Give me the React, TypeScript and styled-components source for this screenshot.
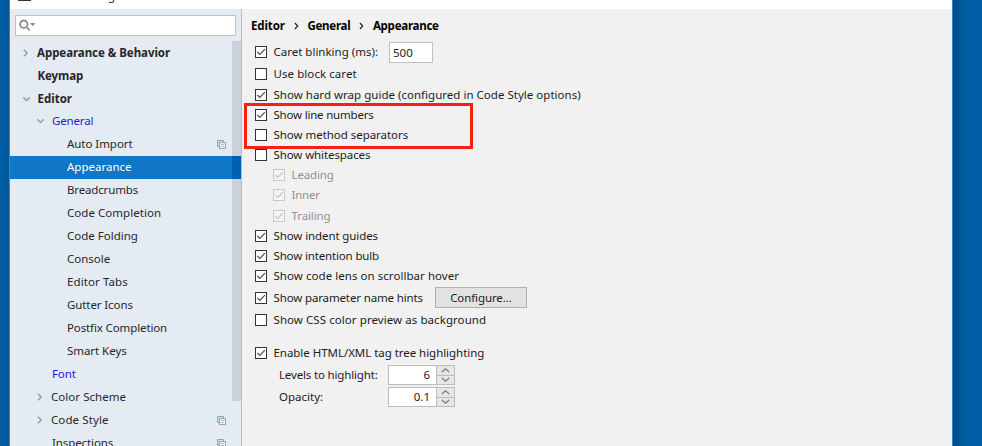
import React from "react";
import styled, { createGlobalStyle } from "styled-components";

const Global = createGlobalStyle`
  * { box-sizing: border-box; }
  body { margin: 0; overflow: hidden; font-family: "Noto Sans", sans-serif; font-size: 11.5px; color: #1c1c1e; }
`;
const Desktop = styled.div`
  width: 982px; height: 446px; overflow: hidden; display: flex; padding: 0 29px 0 9px;
  background: linear-gradient(90deg, #005ea5 0, #00579a 9px, #00579a 953px, #004a84 953px, #00589b 960px, #005ea6 970px);
`;
const Window = styled.div`
  flex: 1; display: flex; flex-direction: column; border: solid #2f86cc; border-width: 0 1px; background: #f1f1f1;
`;
const TitleBar = styled.div`
  height: 9px; background: #fff; display: flex; align-items: flex-end; padding-left: 8px; overflow: hidden; flex: none;
`;
const TitleIcon = styled.span`
  width: 13px; height: 10px; margin-bottom: 8px; background: #333; flex: none;
`;
const TitleText = styled.span`
  margin: 0 0 5px 6px; font-size: 11.3px; line-height: 16px; letter-spacing: -0.1px; color: #222;
`;
const Body = styled.div`flex: 1; display: flex; min-height: 0;`;
const Sidebar = styled.aside`
  width: 232px; background: #e5ebf2; border-right: 1px solid #b9bcc0; display: flex; flex-direction: column; flex: none;
`;
const Search = styled.div`
  margin: 6px 5px 5px 5px; height: 21px; flex: none; border: 1px solid #bfc3c7; background: #fff;
  display: flex; align-items: center; padding-left: 3px;
`;
const Tree = styled.div`position: relative; flex: 1; overflow: hidden;`;
const TreeRow = styled.div<{ $x: number; $bold?: boolean; $color?: string; $selected?: boolean }>`
  height: 23px; display: flex; align-items: center;
  padding: 0 15px ${p => (p.$bold ? 0 : 1)}px ${p => p.$x - 10 - 15}px;
  font-weight: ${p => (p.$bold ? 700 : 400)};
  color: ${p => (p.$selected ? "#fff" : p.$color || "#26272a")};
  background: ${p => (p.$selected ? "#0f76c8" : "transparent")};
`;
const Twisty = styled.span`width: 15px; display: flex; align-items: center; flex: none;`;
const Label = styled.span<{ $ls?: number }>`
  line-height: 16px; white-space: pre; letter-spacing: ${p => p.$ls || 0}px;
`;
const Spacer = styled.span`flex: 1;`;
const Scrollbar = styled.div`
  position: absolute; right: 0; top: 0; width: 9px; height: 360px; background: #cbd1d9;
`;
const ScrollShade = styled.div`margin-top: 115px; height: 23px; background: #0060b0;`;

const Content = styled.main`flex: 1; padding: 6px 0 0 13px; display: flex; flex-direction: column;`;
const Crumbs = styled.div`
  height: 22px; margin-left: -4px; display: flex; align-items: center; font-weight: 700; color: #000; flex: none;
`;
const CrumbArrow = styled.span`width: 22.5px; display: flex; justify-content: center;`;
const Option = styled.div<{ $h: number; $gap?: number; $indent?: number; $muted?: boolean }>`
  height: ${p => p.$h}px; margin-top: ${p => p.$gap || 0}px; display: flex; align-items: center; flex: none;
  padding-left: ${p => p.$indent || 0}px; color: ${p => (p.$muted ? "#919191" : "#1c1c1e")};
`;
const Box = styled.span<{ $muted?: boolean }>`
  width: 12px; height: 12px; margin-right: 6.5px; flex: none; display: flex;
  border: 1px solid ${p => (p.$muted ? "#c9c9c9" : "#333")}; background: ${p => (p.$muted ? "#f5f5f5" : "#fff")};
`;
const Field = styled.span`
  width: 44px; height: 21px; margin-left: 11px; border: 1px solid #bfbfbf; background: #fff;
  display: flex; align-items: center; padding-left: 3px;
`;
const Button = styled.button`
  width: 92px; height: 21px; margin: 0 0 0 12px; padding: 0; border: 1px solid #b0b0b0; background: #e2e2e2;
  display: flex; align-items: center; justify-content: center; font: inherit; color: inherit; letter-spacing: -0.1px;
`;
const Group = styled.div`
  position: relative; display: flex; flex-direction: column; flex: none;
`;
const Highlight = styled.div`
  position: absolute; left: -11px; top: -2px; width: 229px; height: 46px; border: 3px solid #f6220f;
`;
const FieldLabel = styled.span`width: 109px; display: flex;`;
const Spinner = styled.span`
  width: 67px; height: 20px; border: 1px solid #bcbcbc; background: #fff; display: flex;
`;
const SpinValue = styled.span`flex: 1; text-align: right; padding-right: 6px; line-height: 18px;`;
const SpinKeys = styled.span`width: 18px; display: flex; flex-direction: column; border-left: 1px solid #bcbcbc;`;
const SpinKey = styled.span`
  flex: 1; background: #e6e6e6; display: flex; align-items: center; justify-content: center;
  & + & { border-top: 1px solid #bcbcbc; }
`;

const Chevron = ({ open }: { open?: boolean }) => (
  <svg width="8" height="8" viewBox="0 0 8 8" fill="none" stroke="#9299a2" strokeWidth="1.4">
    <path d={open ? "M0.2 2.2 3.5 5.6 6.8 2.2" : "M1.8 0.7 5.2 4 1.8 7.3"} />
  </svg>
);
const CopyIcon = () => (
  <svg width="9" height="9" viewBox="0 0 9 9" fill="none">
    <path d="M2 6.5H.5v-6h6V2" fill="#cfe0ea" stroke="#7fa9bf" />
    <rect x="2.5" y="2.5" width="6" height="6" fill="#eef1f4" stroke="#9da5ac" />
    <path d="M4 4.5h3M4 6.5h3" stroke="#a9b1b8" strokeWidth=".8" />
  </svg>
);
const Check = ({ on, muted }: { on?: boolean; muted?: boolean }) => (
  <Box $muted={muted}>
    {on && (
      <svg width="10" height="10" viewBox="0 0 10 10" fill="none" stroke={muted ? "#c2c2c2" : "#4a4a4a"} strokeWidth="1.2">
        <path d="M1.2 4.9 3.8 7.4 8.9 2.2" />
      </svg>
    )}
  </Box>
);
const Spin = ({ value }: { value: string }) => (
  <Spinner>
    <SpinValue>{value}</SpinValue>
    <SpinKeys>
      {["M.8 4 4.5.8 8.2 4", "M.8 1 4.5 4.2 8.2 1"].map(d => (
        <SpinKey key={d}>
          <svg width="9" height="5" viewBox="0 0 9 5" fill="none" stroke="#777" strokeWidth="1.1"><path d={d} /></svg>
        </SpinKey>
      ))}
    </SpinKeys>
  </Spinner>
);
const Separator = () => (
  <CrumbArrow>
    <svg width="5" height="8" viewBox="0 0 5 8" fill="none" stroke="#222" strokeWidth="1.2"><path d="M.9 1 3.7 4 .9 7" /></svg>
  </CrumbArrow>
);

type Item = { t: string; x: number; ls?: number; bold?: boolean; color?: string; sel?: boolean; open?: boolean; shut?: boolean; copy?: boolean };
const items: Item[] = [
  { t: "Appearance & Behavior", x: 37, bold: true, shut: true, ls: -0.05 },
  { t: "Keymap", x: 37.5, bold: true, ls: -0.1 },
  { t: "Editor", x: 37.5, bold: true, open: true },
  { t: "General", x: 52, color: "#1a1ae0", open: true, ls: -0.15 },
  { t: "Auto Import", x: 67, copy: true, ls: -0.05 },
  { t: "Appearance", x: 67, sel: true },
  { t: "Breadcrumbs", x: 67, ls: -0.15 },
  { t: "Code Completion", x: 67, ls: 0.04 },
  { t: "Code Folding", x: 67 },
  { t: "Console", x: 67 },
  { t: "Editor Tabs", x: 67, ls: 0.1 },
  { t: "Gutter Icons", x: 67, ls: -0.1 },
  { t: "Postfix Completion", x: 67, ls: -0.12 },
  { t: "Smart Keys", x: 67, ls: -0.05 },
  { t: "Font", x: 52, color: "#1a1ae0", ls: -0.1 },
  { t: "Color Scheme", x: 51, shut: true, ls: 0.05 },
  { t: "Code Style", x: 51, shut: true, copy: true, ls: 0.1 },
  { t: "Inspections", x: 52, copy: true, ls: -0.1 },
];

export default function App() {
  return (
    <Desktop>
      <Global />
      <Window>
        <TitleBar><TitleIcon /><TitleText>Default Settings</TitleText></TitleBar>
        <Body>
          <Sidebar>
            <Search>
              <svg width="17" height="13" viewBox="0 0 17 13" fill="none" stroke="#8c8c8c" strokeWidth="1.8">
                <circle cx="4.8" cy="5.2" r="3.7" /><path d="m7.5 8 3.3 3.5" />
                <path d="M11 4h5.4l-2.7 3.2z" fill="#8c8c8c" stroke="none" />
              </svg>
            </Search>
            <Tree>
              {items.map(i => (
                <TreeRow key={i.t} $x={i.x} $bold={i.bold} $color={i.color} $selected={i.sel}>
                  <Twisty>{(i.open || i.shut) && <Chevron open={i.open} />}</Twisty>
                  <Label $ls={i.ls}>{i.t}</Label>
                  <Spacer />
                  {i.copy && <CopyIcon />}
                </TreeRow>
              ))}
              <Scrollbar><ScrollShade /></Scrollbar>
            </Tree>
          </Sidebar>
          <Content>
            <Crumbs>
              <Label $ls={-0.1}>Editor</Label><Separator /><Label $ls={-0.25}>General</Label><Separator /><Label $ls={-0.25}>Appearance</Label>
            </Crumbs>
            <Option $h={30}><Check on /><Label>Caret blinking (ms):</Label><Field>500</Field></Option>
            <Option $h={14}><Check /><Label $ls={0.07}>Use block caret</Label></Option>
            <Option $h={20} $gap={4}><Check on /><Label $ls={0.02}>Show hard wrap guide (configured in Code Style options)</Label></Option>
            <Group>
              <Option $h={20}><Check on /><Label $ls={-0.2}>Show line numbers</Label></Option>
              <Option $h={20}><Check /><Label $ls={-0.04}>Show method separators</Label></Option>
              <Highlight />
            </Group>
            <Option $h={20}><Check /><Label $ls={-0.1}>Show whitespaces</Label></Option>
            <Option $h={20} $indent={18} $muted><Check on muted /><Label $ls={-0.15}>Leading</Label></Option>
            <Option $h={20} $indent={18} $muted><Check on muted /><Label $ls={-0.2}>Inner</Label></Option>
            <Option $h={21} $indent={18} $muted><Check on muted /><Label $ls={-0.1}>Trailing</Label></Option>
            <Option $h={20}><Check on /><Label $ls={-0.1}>Show indent guides</Label></Option>
            <Option $h={20}><Check on /><Label $ls={-0.15}>Show intention bulb</Label></Option>
            <Option $h={20}><Check on /><Label $ls={0.05}>Show code lens on scrollbar hover</Label></Option>
            <Option $h={23}><Check on /><Label $ls={-0.14}>Show parameter name hints</Label><Button>Configure...</Button></Option>
            <Option $h={21}><Check /><Label $ls={0.07}>Show CSS color preview as background</Label></Option>
            <Option $h={22} $gap={12}><Check on /><Label $ls={-0.04}>Enable HTML/XML tag tree highlighting</Label></Option>
            <Option $h={22} $indent={24}><FieldLabel><Label $ls={-0.16}>Levels to highlight:</Label></FieldLabel><Spin value="6" /></Option>
            <Option $h={22} $indent={24}><FieldLabel><Label>Opacity:</Label></FieldLabel><Spin value="0.1" /></Option>
          </Content>
        </Body>
      </Window>
    </Desktop>
  );
}
